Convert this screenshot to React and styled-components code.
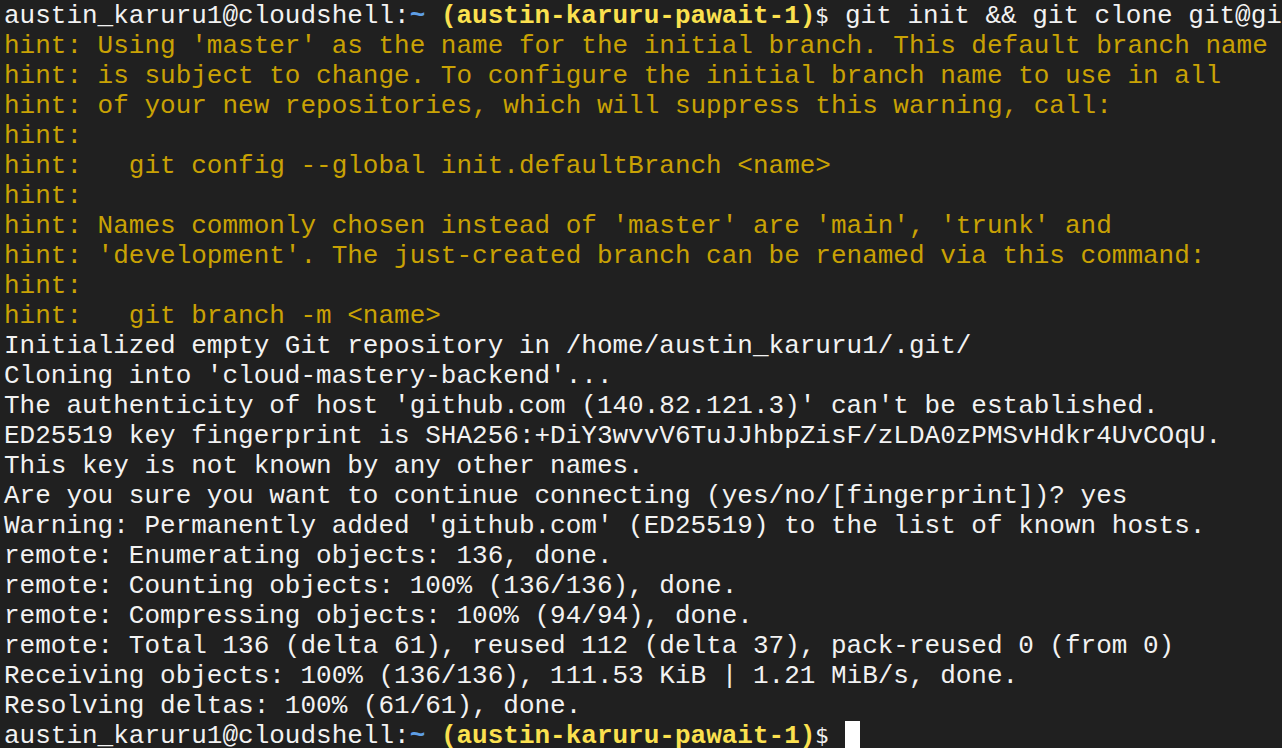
import React from 'react';
import styled, { createGlobalStyle } from 'styled-components';

const GlobalStyle = createGlobalStyle`
  html, body {
    margin: 0;
    padding: 0;
    background-color: #202020;
    overflow: hidden;
  }
`;

const Terminal = styled.div`
  width: 1282px;
  height: 748px;
  overflow: hidden;
  background-color: #202020;
  padding: 1px 0 0 4px;
  box-sizing: border-box;
  font-family: "Liberation Mono", "Courier New", monospace;
  font-size: 26px;
  line-height: 30px;
  color: #f2f2f2;
`;

const Line = styled.div`
  white-space: pre;
  height: 30px;
  color: ${(p) => (p.$hint ? '#c9a204' : '#f2f2f2')};
`;

const User = styled.span`
  color: #f2f2f2;
`;

const Tilde = styled.span`
  color: #5f9fe6;
  font-weight: bold;
`;

const Project = styled.span`
  color: #fbe14f;
  font-weight: bold;
`;

const Dollar = styled.span`
  color: #f2f2f2;
  font-family: "DejaVu Sans", sans-serif;
  font-size: 22px;
  display: inline-block;
  width: 14px;
  text-align: center;
`;

const Cursor = styled.span`
  display: inline-block;
  width: 15px;
  height: 28px;
  background-color: #ffffff;
  vertical-align: -6px;
`;

const Prompt = ({ children }) => (
  <Line>
    <User>austin_karuru1@cloudshell:</User>
    <Tilde>~</Tilde> <Project>(austin-karuru-pawait-1)</Project>
    <Dollar>$</Dollar> {children}
  </Line>
);

const hints = [
  "hint: Using 'master' as the name for the initial branch. This default branch name",
  'hint: is subject to change. To configure the initial branch name to use in all',
  'hint: of your new repositories, which will suppress this warning, call:',
  'hint:',
  'hint:   git config --global init.defaultBranch <name>',
  'hint:',
  "hint: Names commonly chosen instead of 'master' are 'main', 'trunk' and",
  "hint: 'development'. The just-created branch can be renamed via this command:",
  'hint:',
  'hint:   git branch -m <name>',
];

const output = [
  'Initialized empty Git repository in /home/austin_karuru1/.git/',
  "Cloning into 'cloud-mastery-backend'...",
  "The authenticity of host 'github.com (140.82.121.3)' can't be established.",
  'ED25519 key fingerprint is SHA256:+DiY3wvvV6TuJJhbpZisF/zLDA0zPMSvHdkr4UvCOqU.',
  'This key is not known by any other names.',
  'Are you sure you want to continue connecting (yes/no/[fingerprint])? yes',
  "Warning: Permanently added 'github.com' (ED25519) to the list of known hosts.",
  'remote: Enumerating objects: 136, done.',
  'remote: Counting objects: 100% (136/136), done.',
  'remote: Compressing objects: 100% (94/94), done.',
  'remote: Total 136 (delta 61), reused 112 (delta 37), pack-reused 0 (from 0)',
  'Receiving objects: 100% (136/136), 111.53 KiB | 1.21 MiB/s, done.',
  'Resolving deltas: 100% (61/61), done.',
];

const App = () => {
  return (
    <>
      <GlobalStyle />
      <Terminal>
        <Prompt>git init &amp;&amp; git clone git@github.com:austin-karuru/cloud-mastery-backend.git</Prompt>
        {hints.map((h, i) => (
          <Line key={'h' + i} $hint>{h}</Line>
        ))}
        {output.map((o, i) => (
          <Line key={'o' + i}>{o}</Line>
        ))}
        <Prompt>
          <Cursor />
        </Prompt>
      </Terminal>
    </>
  );
};

export default App;
